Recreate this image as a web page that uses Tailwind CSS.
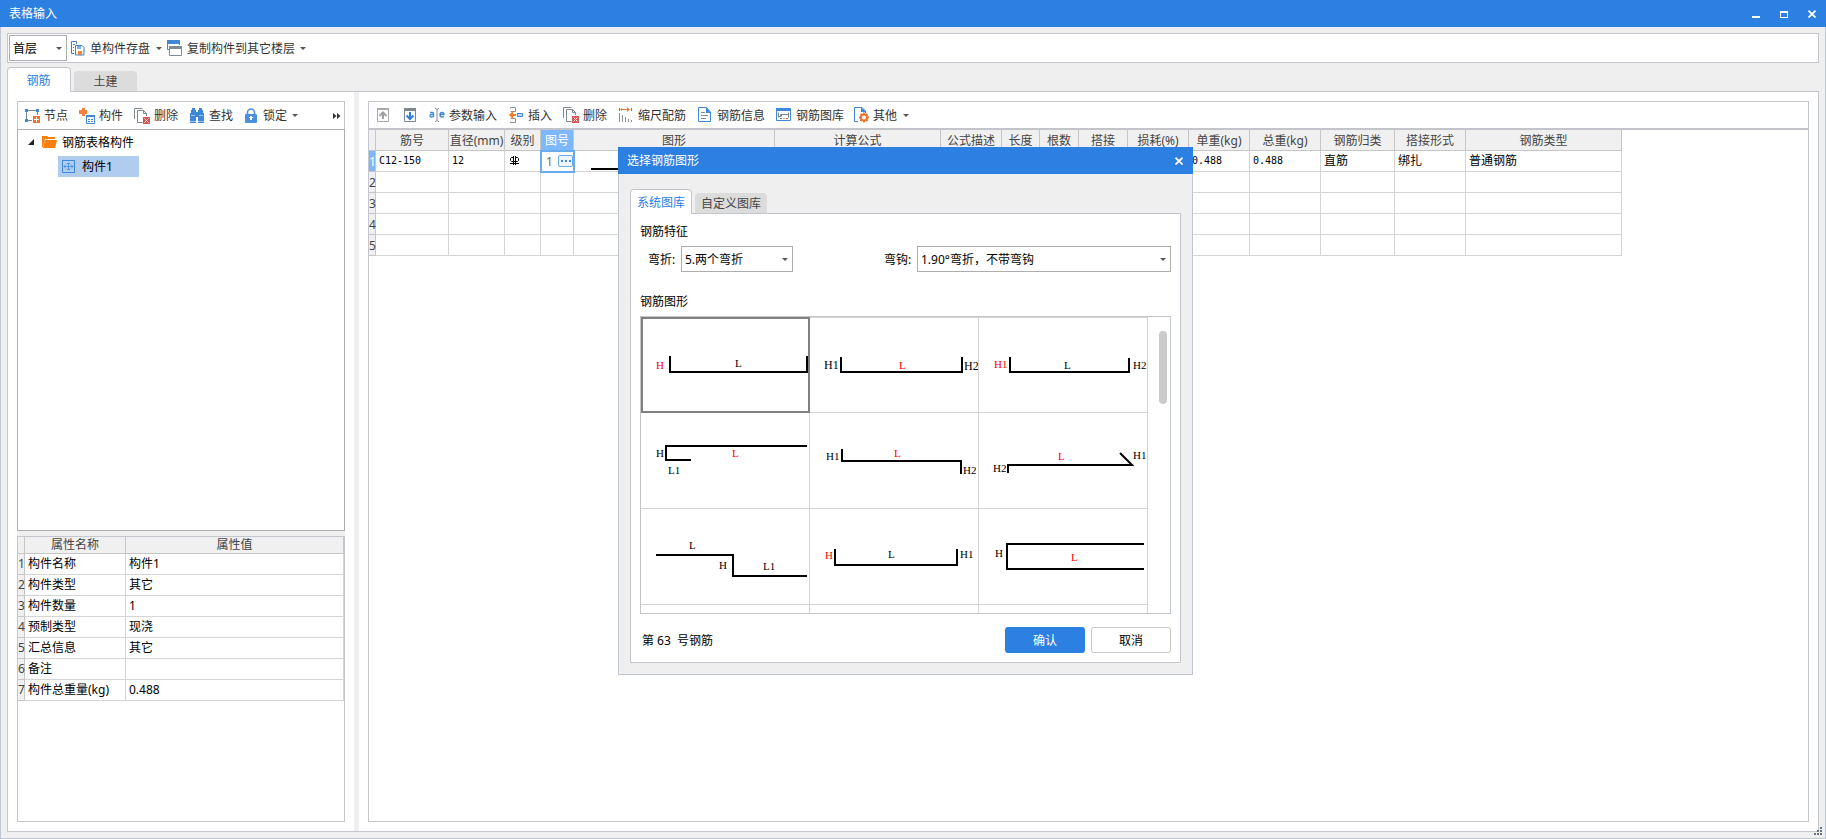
<!DOCTYPE html>
<html lang="zh-CN">
<head>
<meta charset="utf-8">
<title>表格输入</title>
<script src="https://cdn.jsdelivr.net/npm/@tailwindcss/browser@4"></script>
</head>
<body class="font-['Noto_Sans','Noto_Sans_CJK_SC',sans-serif] text-[12px] leading-4 text-black">
<div class="relative flex h-screen flex-col overflow-hidden bg-[#efefef]">

  <!-- window title bar -->
  <header class="flex h-[27px] shrink-0 items-center bg-[#2c80e2] pl-[9px] pr-[10px] text-white">
    <h1 class="flex-1 pt-px">表格输入</h1>
    <div class="flex items-center gap-5">
      <button aria-label="最小化"><svg class="block" width="8" height="8" fill="#fff"><path d="M0 6h8v2H0z"/></svg></button>
      <button aria-label="最大化"><svg class="block" width="8" height="8" fill="#fff" fill-rule="evenodd"><path d="M0 1h8v7H0zM1 3v4h6V3z"/></svg></button>
      <button aria-label="关闭"><svg class="block" width="8" height="8" fill="none" stroke="#fff" stroke-width="1.7"><path d="M.5 .7l7 6.8M7.500 .7l-7 6.800"/></svg></button>
    </div>
  </header>

  <div class="flex min-h-0 flex-1 flex-col border border-t-0 border-[#c0c6d4] px-[6px] pb-[6px] pt-[6px]">
    <!-- main toolbar -->
    <div class="flex h-[30px] shrink-0 items-center border border-[#c3c6cc] bg-white pl-px text-[#333]">
      <div class="relative h-[26px] w-[58px]">
        <select aria-label="楼层" class="h-full w-full appearance-none border border-[#adadad] bg-white pl-[3px] pt-px text-black"><option>首层</option></select>
        <svg class="pointer-events-none absolute right-[5px] top-[12px]" width="6" height="3" fill="#555"><path d="M0 0h6L3 3z"/></svg>
      </div>
      <button class="ml-1 flex items-center gap-[5px]">
        <svg width="14" height="15" fill="none"><path d="M3 12.500H.5V.5h5V3" stroke="#3d7fc9"/><path d="M2 3.500h2M2 6.500h1M2 9.500h1" stroke="#3d7fc9"/><path d="M4.500 4.500h6.500l2 2v7.500h-8.500z" fill="#fff" stroke="#3d7fc9"/><path d="M6 5h4v3H6z" fill="#7fb0e8"/><path d="M7 10h4v4H7z" fill="#f0833a"/></svg>
        <span class="pt-px">单构件存盘</span>
        <svg class="ml-px" width="6" height="3" fill="#555"><path d="M0 0h6L3 3z"/></svg>
      </button>
      <button class="ml-[5px] flex items-center gap-[5px]">
        <svg width="15" height="16" fill="none"><path d="M.5 9.500V.5h12V5M.5 9.500H2" stroke="#4287d6"/><path d="M0 0h13v4H0z" fill="#4287d6"/><path d="M2.500 6.500h12v9h-12z" fill="#fff" stroke="#7f8c96"/><path d="M2 6h13v3H2z" fill="#7f8c96"/></svg>
        <span class="pt-px">复制构件到其它楼层</span>
        <svg width="6" height="3" fill="#555"><path d="M0 0h6L3 3z"/></svg>
      </button>
    </div>

    <!-- discipline tabs -->
    <div class="flex h-7 shrink-0 items-end gap-[3px]" role="tablist">
      <button role="tab" aria-selected="true" class="relative z-10 -mb-px h-[25px] w-16 rounded-t border border-b-0 border-[#c3c6cc] bg-white pt-px pr-px text-[#2c80e2]">钢筋</button>
      <button role="tab" class="h-5 w-[63px] rounded-t bg-[#dcdcdc] pt-px text-[#444]">土建</button>
    </div>

    <main class="flex min-h-0 flex-1 border border-[#c3c6cc] bg-white">
      <!-- component tree and properties -->
      <section class="flex w-[346px] shrink-0 flex-col p-[9px]">
        <div class="flex h-7 shrink-0 items-center gap-[2px] border border-b-0 border-[#c3c6cc] pl-[2px] text-[#333]">
          <button class="flex h-5 items-center gap-1 rounded pl-1 pr-[5px] shadow-[0_0_1px_#e8e8e8]">
            <svg width="16" height="16" fill="none"><path d="M3 2.500h10M2.500 3v9M13.500 3v4M3 12.500h5" stroke="#7d8790"/><path d="M1 1h3v3H1zM12 1h3v3h-3zM1 11h3v3H1z" fill="#3f87d9"/><path d="M9 8h7v7H9z" fill="#ec7430"/><path d="M10 11.500h5M12.500 9v5" stroke="#fff"/></svg><span class="pt-px">节点</span></button>
          <button class="flex h-5 items-center gap-1 rounded pl-1 pr-[5px] shadow-[0_0_1px_#e8e8e8]">
            <svg width="16" height="16" fill="none"><path d="M3 0h3v2h2v4H6v2H3V6H0V2h3z" fill="#f0803c"/><path d="M7.500 7.500h8v8h-8z" fill="#fff" stroke="#3f87d9"/><path d="M7 7h9v2H7z" fill="#3f87d9"/><path d="M9 11.500h2M12 11.500h2M9 13.500h2M12 13.500h2" stroke="#3f87d9"/></svg><span class="pt-px">构件</span></button>
          <button class="flex h-5 items-center gap-1 rounded pl-1 pr-[5px] shadow-[0_0_1px_#e8e8e8]">
            <svg width="16" height="16" fill="none"><path d="M.5 11V.5h8M3.500 14.500v-12h6l3 3V8M3.500 14.500h5M9.500 2.500v3h3" stroke="#7f868c"/><path d="M9 9h7v7H9z" fill="#d9534f"/><path d="M10.500 10.500l4 4M14.500 10.500l-4 4" stroke="#fff"/></svg><span class="pt-px">删除</span></button>
          <button class="flex h-5 items-center gap-1 rounded pl-1 pr-[5px] shadow-[0_0_1px_#e8e8e8]">
            <svg width="16" height="16" fill="#3f87d9"><path d="M3 0h3v2h1v2h2V2h1V0h3v2h1v3h1v10H9V9H7v6H1V5h1V2h1z"/><path d="M2 7h4v1H2zM10 7h4v1h-4zM1 13h6v1H1zM9 13h6v1H9z" fill="#9cc4ef"/></svg><span class="pt-px">查找</span></button>
          <button class="flex h-5 items-center gap-1 pl-1">
            <svg width="16" height="16" fill="none"><path d="M3.500 7V4.500a3.500 3.500 0 0 1 7 0V7" stroke="#4a90e2" stroke-width="1.600"/><rect x="1" y="6" width="12" height="9" rx="1" fill="#4a90e2"/><path d="M6 8h2v4H6zM5 9h4v1H5z" fill="#fff"/></svg><span class="-ml-px pt-px">锁定</span>
            <svg class="ml-px" width="6" height="3" fill="#555"><path d="M0 0h6L3 3z"/></svg></button>
          <button aria-label="更多" class="ml-auto mr-[3px]"><svg width="8" height="6" fill="#333"><path d="M0 0l3.500 3L0 6zM4 0l3.500 3L4 6z"/></svg></button>
        </div>
        <div class="h-[402px] shrink-0 border border-[#adadad] pt-px">
          <div class="flex h-[23px] items-center pl-[10px]">
            <svg width="7" height="7"><path d="M6 0v6H0z" fill="#222"/></svg>
            <svg class="ml-[7px]" width="15" height="13" fill="#ff7d0a"><path d="M0 0h5l1 1h7v2H3L1 11H0z"/><path d="M3 4h12l-2 8H1z"/></svg>
            <span class="ml-[5px] pt-px">钢筋表格构件</span>
          </div>
          <div class="ml-10 mt-[2px] flex h-[21px] w-[81px] items-center bg-[#b0ccee] pl-1">
            <svg width="13" height="13" fill="none" stroke="#3f87d9"><path d="M.5.5h12v12H.5z"/><path d="M2 6.500h9M6.500 3v7M4 4.500l-2 2 2 2M9 4.500l2 2-2 2M5 3.500h3M5 9.500h3" stroke-width=".8"/></svg>
            <span class="ml-[7px]">构件1</span>
          </div>
        </div>
        <div class="h-[5px] shrink-0 bg-[#efefef]"></div>
        <div class="min-h-0 flex-1 border border-[#c3c6cc]">
          <table class="w-full table-fixed border-separate border-spacing-0 text-left whitespace-nowrap [&_td]:border-b [&_td]:border-r [&_td]:border-[#d5d5d5] [&_td]:p-0 [&_td]:pl-[3px] [&_th]:border-b [&_th]:border-r [&_th]:border-[#c6c6c6] [&_th]:bg-[#f0f0f0] [&_th]:p-0 [&_th]:font-normal [&_th]:text-[#444]">
            <colgroup><col class="w-[7px]"><col class="w-[101px]"><col></colgroup>
            <thead><tr class="h-[17px] text-center"><th></th><th>属性名称</th><th>属性值</th></tr></thead>
            <tbody>
              <tr class="h-[21px]"><th>1</th><td>构件名称</td><td>构件1</td></tr>
              <tr class="h-[21px]"><th>2</th><td>构件类型</td><td>其它</td></tr>
              <tr class="h-[21px]"><th>3</th><td>构件数量</td><td>1</td></tr>
              <tr class="h-[21px]"><th>4</th><td>预制类型</td><td>现浇</td></tr>
              <tr class="h-[21px]"><th>5</th><td>汇总信息</td><td>其它</td></tr>
              <tr class="h-[21px]"><th>6</th><td>备注</td><td></td></tr>
              <tr class="h-[21px]"><th>7</th><td>构件总重量(kg)</td><td>0.488</td></tr>
            </tbody>
          </table>
        </div>
      </section>

      <div class="w-[5px] shrink-0 bg-[#efefef]"></div>

      <!-- rebar table -->
      <section class="flex min-w-0 flex-1 p-[9px]">
        <div class="min-w-0 flex-1 overflow-hidden border border-[#c3c6cc]">
          <div class="flex h-[26px] items-center gap-[2px] pl-px text-[#333]">
            <button aria-label="上移" class="flex h-5 w-[25px] items-center justify-center rounded shadow-[0_0_1px_#e8e8e8]"><svg width="12" height="14" fill="none"><path d="M.5.5h11v13H.5z" stroke="#a9a9a9"/><path d="M0 0h12v2H0z" fill="#a9a9a9"/><path d="M6 11V5M2.500 8L6 4.500 9.500 8" stroke="#a0a0a0" stroke-width="2"/></svg></button>
            <button aria-label="下移" class="flex h-5 w-[26px] items-center justify-center rounded shadow-[0_0_1px_#e8e8e8]"><svg width="12" height="14" fill="none"><path d="M.5.5h11v13H.5z" stroke="#7d8790"/><path d="M0 0h12v3H0z" fill="#7d8790"/><path d="M6 4v7M2.500 7.500L6 11l3.500-3.500" stroke="#2f7fdc" stroke-width="2"/></svg></button>
            <button class="flex h-5 items-center gap-1 rounded pl-1 pr-[5px] shadow-[0_0_1px_#e8e8e8]">
              <svg width="16" height="16" fill="none"><path d="M1 5.500h2.500q1 0 1 1V10M4.500 7.500h-2q-1.500 0-1.500 1.300t1.500 1.200q2 0 2-1M11 7.500h4q0-2-2-2t-2 2.200 2 2.300q1.200 0 1.800-.5" stroke="#3f87d9" stroke-width="1.300"/><path d="M6 1.500h1l1 1 1-1h1M8 2v12M6 14.500h1l1-1 1 1h1" stroke="#7d8790"/></svg><span class="pt-px">参数输入</span></button>
            <button class="flex h-5 items-center gap-1 rounded pl-1 pr-[5px] shadow-[0_0_1px_#e8e8e8]">
              <svg width="16" height="16" fill="none"><path d="M2.500 1.500V.5h5v4h-5M2.500 11.500h5v4h-5v-1" stroke="#8a9299"/><path d="M5 4L1 8l4 4V9h3V7H5z" fill="#f07a26"/><path d="M9.500 6.500h5v3h-5z" fill="#b9d5f3" stroke="#3f87d9"/></svg><span class="pt-px">插入</span></button>
            <button class="flex h-5 items-center gap-1 rounded pl-1 pr-[5px] shadow-[0_0_1px_#e8e8e8]">
              <svg width="16" height="16" fill="none"><path d="M.5 11V.5h8M3.500 14.500v-12h6l3 3V8M3.500 14.500h5M9.500 2.500v3h3" stroke="#7f868c"/><path d="M9 9h7v7H9z" fill="#d9534f"/><path d="M10.500 10.500l4 4M14.500 10.500l-4 4" stroke="#fff"/></svg><span class="pt-px">删除</span></button>
            <button class="flex h-5 items-center gap-1 rounded pl-1 pr-[5px] shadow-[0_0_1px_#e8e8e8]">
              <svg width="16" height="16" fill="none"><path d="M3 2.500h8" stroke="#f07a26"/><path d="M4 1v3L2 2.500zM9 0v5l3-2.500z" fill="#f07a26"/><path d="M1.500 1v3M13.500 1v3" stroke="#3f87d9"/><path d="M1.500 6v9M4.500 8v7M7.500 10v5M10.500 12v3M13.500 13v2" stroke="#7d8790" stroke-width=".9"/></svg><span class="pt-px">缩尺配筋</span></button>
            <button class="flex h-5 items-center gap-1 rounded pl-1 pr-[5px] shadow-[0_0_1px_#e8e8e8]">
              <svg width="16" height="16" fill="none"><path d="M1.500.5v14h12V5L9.500.5z" fill="#fff" stroke="#3f87d9"/><path d="M9 0v6h5z" fill="#3f87d9"/><path d="M4 5.500h4M4 8.500h7M4 11.500h5" stroke="#7d8790"/></svg><span class="pt-px">钢筋信息</span></button>
            <button class="flex h-5 items-center gap-1 rounded pl-1 pr-[5px] shadow-[0_0_1px_#e8e8e8]">
              <svg width="16" height="16" fill="none"><path d="M.5 1.500h14v12H.5z" stroke="#3f87d9"/><path d="M0 1h15v3H0z" fill="#3f87d9"/><path d="M2.500 5.500v5M2.500 9.500h2v-2h8M12.500 5.500v5M5.500 7.500v2" stroke="#7d8790"/><path d="M4 11.500h2" stroke="#3f87d9"/><path d="M7 11.500h2" stroke="#f0b429"/><path d="M10 11.500h2" stroke="#d9534f"/></svg><span class="pt-px">钢筋图库</span></button>
            <button class="flex h-5 items-center gap-1 pl-[2px]">
              <svg width="16" height="16" fill="none"><path d="M5 14.500H1.500V.5H9L12.500 4v2" stroke="#3f87d9"/><path d="M8 0v5h5z" fill="#3f87d9"/><path d="M11 5.500v10M6 10.500h10M7.500 7l7 7M14.500 7l-7 7" stroke="#ec7430" stroke-width="2"/><circle cx="11" cy="10.500" r="4" fill="#ec7430"/><circle cx="11" cy="10.500" r="2" fill="#fff"/></svg><span class="pt-px">其他</span>
              <svg class="ml-[2px]" width="6" height="3" fill="#555"><path d="M0 0h6L3 3z"/></svg></button>
          </div>
          <div class="h-[2px] bg-[#c3c4ca]"></div>
          <table class="w-[1253px] table-fixed border-separate border-spacing-0 whitespace-nowrap text-left [&_td]:border-b [&_td]:border-r [&_td]:border-[#d5d5d5] [&_td]:p-0 [&_td]:pl-[3px] [&_th]:border-b [&_th]:border-r [&_th]:border-[#c6c6c6] [&_th]:p-0 [&_th]:pt-px [&_th]:font-normal">
            <colgroup><col class="w-[7px]"><col class="w-[73px]"><col class="w-[56px]"><col class="w-[36px]"><col class="w-[33px]"><col class="w-[201px]"><col class="w-[166px]"><col class="w-[61px]"><col class="w-[38px]"><col class="w-[39px]"><col class="w-[49px]"><col class="w-[61px]"><col class="w-[61px]"><col class="w-[71px]"><col class="w-[74px]"><col class="w-[71px]"><col class="w-[156px]"></colgroup>
            <thead>
              <tr class="h-[21px] bg-[#f0f0f0] text-center text-[#444]"><th></th><th>筋号</th><th>直径(mm)</th><th>级别</th><th class="bg-[#7cb8fb] text-white">图号</th><th>图形</th><th>计算公式</th><th>公式描述</th><th>长度</th><th>根数</th><th>搭接</th><th>损耗(%)</th><th>单重(kg)</th><th>总重(kg)</th><th>钢筋归类</th><th>搭接形式</th><th>钢筋类型</th></tr>
            </thead>
            <tbody class="font-['DejaVu_Sans_Mono','Noto_Sans_CJK_SC',monospace]">
              <tr class="h-[21px] text-[10px]"><th class="bg-[#7cb8fb] font-['Noto_Sans'] text-[12px] text-white">1</th><td>C12-150</td><td>12</td>
                <td><svg class="ml-[2px] block" width="10" height="10" fill="none" stroke="#000" role="img" aria-label="三级钢"><path d="M3.500 0v9M5.500 0v9M0 7.500h9M3 1.500H1.500l-1 1v2l1 1h6l1-1v-2l-1-1H6"/></svg></td>
                <td class="outline-2 -outline-offset-1 outline-[#6aabee]"><div class="flex items-center justify-between font-['Noto_Sans'] text-[12px] text-[#7c6a58]"><span class="pl-[2px] pt-px">1</span><button aria-label="选择图形" class="flex h-3 w-[15px] items-center justify-center gap-[2px] rounded-[2px] border border-[#6aabee] bg-[#eef5fd]"><i class="size-[2px] bg-[#3f87d9]"></i><i class="size-[2px] bg-[#3f87d9]"></i><i class="size-[2px] bg-[#3f87d9]"></i></button></div></td>
                <td class="align-bottom"><div class="mb-px ml-[14px] mr-4 h-[2px] bg-black"></div></td><td></td><td></td><td></td><td></td><td></td><td></td><td>0.488</td><td>0.488</td><td class="text-[12px]">直筋</td><td class="text-[12px]">绑扎</td><td class="text-[12px]">普通钢筋</td></tr>
              <tr class="h-[21px]"><th class="bg-[#f0f0f0] font-['Noto_Sans'] text-[#444]">2</th><td></td><td></td><td></td><td></td><td></td><td></td><td></td><td></td><td></td><td></td><td></td><td></td><td></td><td></td><td></td><td></td></tr>
              <tr class="h-[21px]"><th class="bg-[#f0f0f0] font-['Noto_Sans'] text-[#444]">3</th><td></td><td></td><td></td><td></td><td></td><td></td><td></td><td></td><td></td><td></td><td></td><td></td><td></td><td></td><td></td><td></td></tr>
              <tr class="h-[21px]"><th class="bg-[#f0f0f0] font-['Noto_Sans'] text-[#444]">4</th><td></td><td></td><td></td><td></td><td></td><td></td><td></td><td></td><td></td><td></td><td></td><td></td><td></td><td></td><td></td><td></td></tr>
              <tr class="h-[21px]"><th class="bg-[#f0f0f0] font-['Noto_Sans'] text-[#444]">5</th><td></td><td></td><td></td><td></td><td></td><td></td><td></td><td></td><td></td><td></td><td></td><td></td><td></td><td></td><td></td><td></td></tr>
            </tbody>
          </table>
        </div>
      </section>
    </main>
  </div>

  <svg class="absolute bottom-[4px] right-[4px]" width="8" height="8" fill="#6b7280"><path d="M6 0h2v2H6zM3 3h2v2H3zM6 3h2v2H6zM0 6h2v2H0zM3 6h2v2H3zM6 6h2v2H6z"/></svg>

  <!-- shape picker dialog -->
  <div role="dialog" aria-labelledby="dlg" class="absolute left-[618px] top-[147px] z-20 flex w-[575px] flex-col bg-[#efefef]">
    <div class="flex h-[27px] items-center bg-[#2c80e2] pl-[9px] pr-[10px] text-white">
      <h2 id="dlg" class="flex-1">选择钢筋图形</h2>
      <button aria-label="关闭"><svg class="block" width="8" height="8" fill="none" stroke="#fff" stroke-width="1.700"><path d="M.5 .7l7 6.800M7.500 .7l-7 6.800"/></svg></button>
    </div>
    <div class="border border-t-0 border-[#c0c6d0] px-[11px] pb-[11px] pt-[15px]">
      <div class="flex h-6 items-end gap-[3px]" role="tablist">
        <button role="tab" aria-selected="true" class="relative z-10 -mb-px h-[25px] w-[62px] rounded-t border border-b-0 border-[#c3c6cc] bg-white pt-px text-[#2c80e2]">系统图库</button>
        <button role="tab" class="h-5 w-[72px] rounded-t bg-[#dcdcdc] pt-px text-[#444]">自定义图库</button>
      </div>
      <div class="border border-[#c3c6cc] bg-white px-[9px] pb-[9px] pt-[10px]">
        <h3>钢筋特征</h3>
        <div class="mt-[6px] flex items-center pl-2">
          <label for="bend" class="w-[33px] pt-px">弯折:</label>
          <div class="relative h-[26px] w-[112px]">
            <select id="bend" class="h-full w-full appearance-none border border-[#adadad] bg-white pl-[3px] pt-px"><option>5.两个弯折</option></select>
            <svg class="pointer-events-none absolute right-[5px] top-[12px]" width="6" height="3" fill="#555"><path d="M0 0h6L3 3z"/></svg>
          </div>
          <label for="hook" class="ml-[91px] w-[33px] pt-px">弯钩:</label>
          <div class="relative h-[26px] flex-1">
            <select id="hook" class="h-full w-full appearance-none border border-[#adadad] bg-white pl-[3px] pt-px"><option>1.90°弯折，不带弯钩</option></select>
            <svg class="pointer-events-none absolute right-[5px] top-[12px]" width="6" height="3" fill="#555"><path d="M0 0h6L3 3z"/></svg>
          </div>
        </div>
        <h3 class="mt-[22px]">钢筋图形</h3>

        <!-- shape gallery -->
        <div class="mt-[6px] flex h-[298px] justify-between overflow-hidden border border-[#c3c6c6]">
          <div class="grid h-[384px] w-[507px] shrink-0 grid-cols-3 border-t border-[#d5d5d5] font-['Liberation_Serif',serif] text-[11px] [&_svg]:h-full [&_svg]:w-full [&>div]:-mt-px [&>div]:h-24 [&>div]:border-b [&>div]:border-r [&>div]:border-[#d5d5d5]">
            <div class="outline-2 -outline-offset-2 outline-[#808080]"><svg><path d="M29 39V55H166V39" fill="none" stroke="#000" stroke-width="2"/><text x="15" y="52" fill="#f00">H</text><text x="94" y="50">L</text></svg></div>
            <div><svg><path d="M31 40V55H152V40" fill="none" stroke="#000" stroke-width="2"/><text x="14" y="52" class="text-[12px]">H1</text><text x="89" y="52" fill="#f00">L</text><text x="154" y="53" class="text-[12px]">H2</text></svg></div>
            <div><svg><path d="M31 40V55H150V41" fill="none" stroke="#000" stroke-width="2"/><text x="15" y="51" fill="#f00">H1</text><text x="85" y="52">L</text><text x="154" y="52">H2</text></svg></div>
            <div><svg><path d="M166 33H25V47H50" fill="none" stroke="#000" stroke-width="2"/><text x="15" y="44">H</text><text x="91" y="44" fill="#f00">L</text><text x="27" y="61">L1</text></svg></div>
            <div><svg><path d="M32 36V48H151V61" fill="none" stroke="#000" stroke-width="2"/><text x="16" y="47">H1</text><text x="84" y="44" fill="#f00">L</text><text x="153" y="61">H2</text></svg></div>
            <div><svg><path d="M29 60V52H153L141 40" fill="none" stroke="#000" stroke-width="2"/><text x="14" y="59">H2</text><text x="79" y="47" fill="#f00">L</text><text x="154" y="46">H1</text></svg></div>
            <div><svg><path d="M15 46H92V67H166" fill="none" stroke="#000" stroke-width="2"/><text x="48" y="40">L</text><text x="78" y="60">H</text><text x="122" y="61">L1</text></svg></div>
            <div><svg><path d="M25 40V56H147V40" fill="none" stroke="#000" stroke-width="2"/><text x="15" y="50" fill="#f00">H</text><text x="78" y="49">L</text><text x="150" y="49">H1</text></svg></div>
            <div><svg><path d="M165 35H28V60H165" fill="none" stroke="#000" stroke-width="2"/><text x="16" y="48">H</text><text x="92" y="52" fill="#f00">L</text></svg></div>
            <div></div><div></div><div></div>
          </div>
          <div class="mr-[3px] mt-[14px] h-[73px] w-2 rounded-full bg-[#cbcbcb]"></div>
        </div>

        <div class="mt-[13px] flex h-[26px] items-center gap-[6px]">
          <p class="flex-1 pl-[2px] pt-px">第&nbsp;63&nbsp;&nbsp;号钢筋</p>
          <button class="h-full w-20 rounded-[3px] bg-[#2c80e2] pt-px text-white">确认</button>
          <button class="h-full w-20 rounded-[3px] border border-[#c6c6c6] bg-white pt-px">取消</button>
        </div>
      </div>
    </div>
  </div>
</div>
</body>
</html>
